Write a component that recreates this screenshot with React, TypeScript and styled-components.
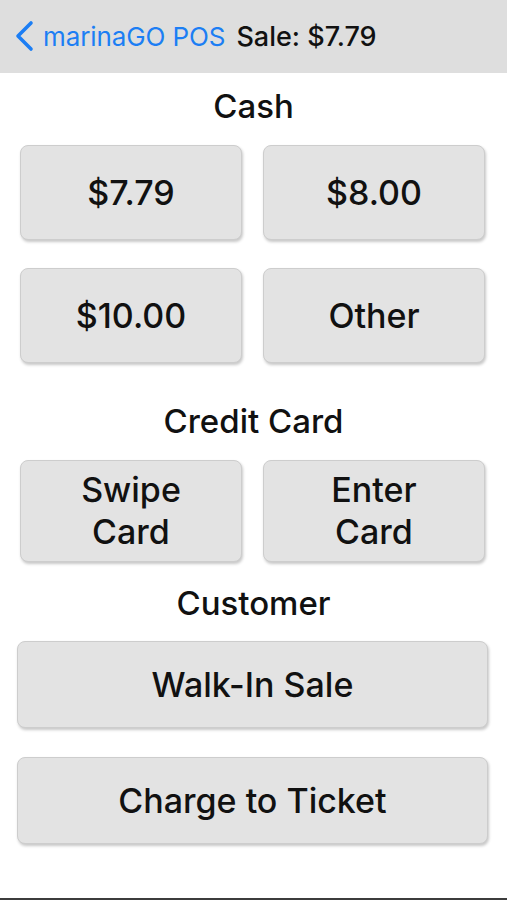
import React from 'react'
import styled, { createGlobalStyle } from 'styled-components'

const GlobalStyle = createGlobalStyle`
  html, body {
    margin: 0;
    padding: 0;
    background: #ffffff;
  }
  body {
    font-family: Inter, "Liberation Sans", Arial, sans-serif;
    color: #111;
  }
`

const Screen = styled.div`
  width: 507px;
  min-height: 900px;
  display: flex;
  flex-direction: column;
  background: #fff;
`

const NavBar = styled.div`
  height: 73px;
  background: #dedede;
  display: flex;
  align-items: center;
  padding: 0 0 0 14px;
  box-sizing: border-box;
`

const BackLink = styled.div`
  display: flex;
  align-items: center;
  color: #1c7ef4;
  font-size: 26px;
  font-weight: 400;
  letter-spacing: -0.1px;
  gap: 9px;
  margin-top: -1px;
`

const NavTitle = styled.div`
  font-size: 27px;
  font-weight: 500;
  color: #111;
  margin-left: 11px;
  margin-top: -1px;
`

const SectionTitle = styled.div<{ $top: number; $height: number }>`
  margin-top: ${p => p.$top}px;
  height: ${p => p.$height}px;
  display: flex;
  align-items: center;
  justify-content: center;
  font-size: 33px;
  font-weight: 500;
  color: #111;
`

const ButtonGrid = styled.div<{ $top?: number; $rowHeight: number }>`
  margin-top: ${p => p.$top ?? 0}px;
  display: grid;
  grid-template-columns: 222px 222px;
  grid-auto-rows: ${p => p.$rowHeight}px;
  column-gap: 21px;
  row-gap: 28px;
  padding-left: 20px;
`

const ButtonStack = styled.div`
  display: flex;
  flex-direction: column;
  gap: 29px;
  padding: 0 19px 0 17px;
`

const PosButton = styled.div<{ $height?: number }>`
  height: ${p => (p.$height ? `${p.$height}px` : '100%')};
  box-sizing: border-box;
  background: #e3e3e3;
  border: 1px solid #cdcdcd;
  border-radius: 8px;
  box-shadow: 1px 2px 3px rgba(0, 0, 0, 0.22);
  display: flex;
  align-items: center;
  justify-content: center;
  text-align: center;
  font-size: 34px;
  font-weight: 500;
  line-height: 42px;
  color: #111;
`

const BottomEdge = styled.div`
  margin-top: auto;
  height: 2px;
  background: #3c3c3c;
`

function Chevron() {
  return (
    <svg width="20" height="32" viewBox="0 0 20 32">
      <polyline
        points="17,3 4,16 17,29"
        fill="none"
        stroke="#1c7ef4"
        strokeWidth="3.6"
        strokeLinecap="round"
        strokeLinejoin="round"
      />
    </svg>
  )
}

export default function App() {
  const cash = ['$7.79', '$8.00', '$10.00', 'Other']

  return (
    <>
      <GlobalStyle />
      <Screen>
        <NavBar>
          <BackLink>
            <Chevron />
            <span>marinaGO POS</span>
          </BackLink>
          <NavTitle>Sale: $7.79</NavTitle>
        </NavBar>

        <SectionTitle $top={0} $height={66}>Cash</SectionTitle>
        <ButtonGrid $top={6} $rowHeight={95}>
          {cash.map(c => (
            <PosButton key={c}>{c}</PosButton>
          ))}
        </ButtonGrid>

        <SectionTitle $top={19} $height={78}>Credit Card</SectionTitle>
        <ButtonGrid $rowHeight={102}>
          <PosButton>Swipe<br />Card</PosButton>
          <PosButton>Enter<br />Card</PosButton>
        </ButtonGrid>

        <SectionTitle $top={3} $height={76}>Customer</SectionTitle>
        <ButtonStack>
          <PosButton $height={87}>Walk-In Sale</PosButton>
          <PosButton $height={87}>Charge to Ticket</PosButton>
        </ButtonStack>

        <BottomEdge />
      </Screen>
    </>
  )
}
